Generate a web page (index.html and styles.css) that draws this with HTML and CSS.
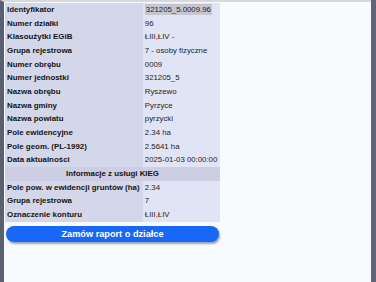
FILE: index.html
```html
<!DOCTYPE html>
<html lang="pl">
<head>
<meta charset="utf-8">
<link rel="stylesheet" href="styles.css">
</head>
<body>
<div class="window">
  <div class="panel">
    <table class="info">
      <tr><th>Identyfikator</th><td><span class="sel">321205_5.0009.96</span></td></tr>
      <tr><th>Numer działki</th><td>96</td></tr>
      <tr><th>Klasoużytki EGiB</th><td>ŁIII,ŁIV -</td></tr>
      <tr><th>Grupa rejestrowa</th><td>7 - osoby fizyczne</td></tr>
      <tr><th>Numer obrębu</th><td>0009</td></tr>
      <tr><th>Numer jednostki</th><td>321205_5</td></tr>
      <tr><th>Nazwa obrębu</th><td>Ryszewo</td></tr>
      <tr><th>Nazwa gminy</th><td>Pyrzyce</td></tr>
      <tr><th>Nazwa powiatu</th><td>pyrzycki</td></tr>
      <tr><th>Pole ewidencyjne</th><td>2.34 ha</td></tr>
      <tr><th>Pole geom. (PL-1992)</th><td>2.5641 ha</td></tr>
      <tr><th>Data aktualności</th><td>2025-01-03 00:00:00</td></tr>
      <tr class="section"><th colspan="2">Informacje z usługi KIEG</th></tr>
      <tr><th>Pole pow. w ewidencji gruntów (ha)</th><td>2.34</td></tr>
      <tr><th>Grupa rejestrowa</th><td>7</td></tr>
      <tr><th>Oznaczenie konturu</th><td>ŁIII,ŁIV</td></tr>
    </table>
    <button class="order">Zamów raport o działce</button>
  </div>
  <div class="scrollbar"></div>
</div>
</body>
</html>
```
FILE: styles.css
```css
html, body {
  margin: 0;
  padding: 0;
  width: 376px;
  height: 282px;
  overflow: hidden;
  background: #f8fbfe;
}
.window {
  display: flex;
  height: 282px;
}
.panel {
  flex: 1;
  border-left: 4px solid #5a6072;
  border-top: 2px solid #d6d8de;
  background: #f8fbfe;
  padding: 1px 0 0 1px;
  font-family: "Liberation Sans", Arial, sans-serif;
  font-size: 7.9px;
}
.scrollbar {
  width: 5px;
  background: #5f6678;
}
.info {
  border-collapse: collapse;
  width: 215px;
}
.info th, .info td {
  height: 13.67px;
  line-height: 13.67px;
  padding: 0 2px;
  white-space: nowrap;
  vertical-align: middle;
}
.info th {
  text-align: left;
  font-weight: bold;
  color: #141414;
  background: #d4d7ea;
}
.info td {
  color: #1e1e1e;
  background: #e1e4f4;
  font-size: 7.8px;
}
.info .section th {
  text-align: center;
  background: #cdcee3;
}
.sel {
  background: #c5c6cf;
  padding: 1px 1px;
}
.order {
  display: block;
  margin: 4px 0 0 1px;
  width: 213px;
  height: 16px;
  border: none;
  border-radius: 8px;
  background: #1768f6;
  color: #ffffff;
  font-family: "Liberation Sans", Arial, sans-serif;
  font-size: 9.2px;
  font-weight: bold;
  padding: 0;
  box-shadow: 1px 2px 2px rgba(40, 50, 80, 0.45);
}
```
